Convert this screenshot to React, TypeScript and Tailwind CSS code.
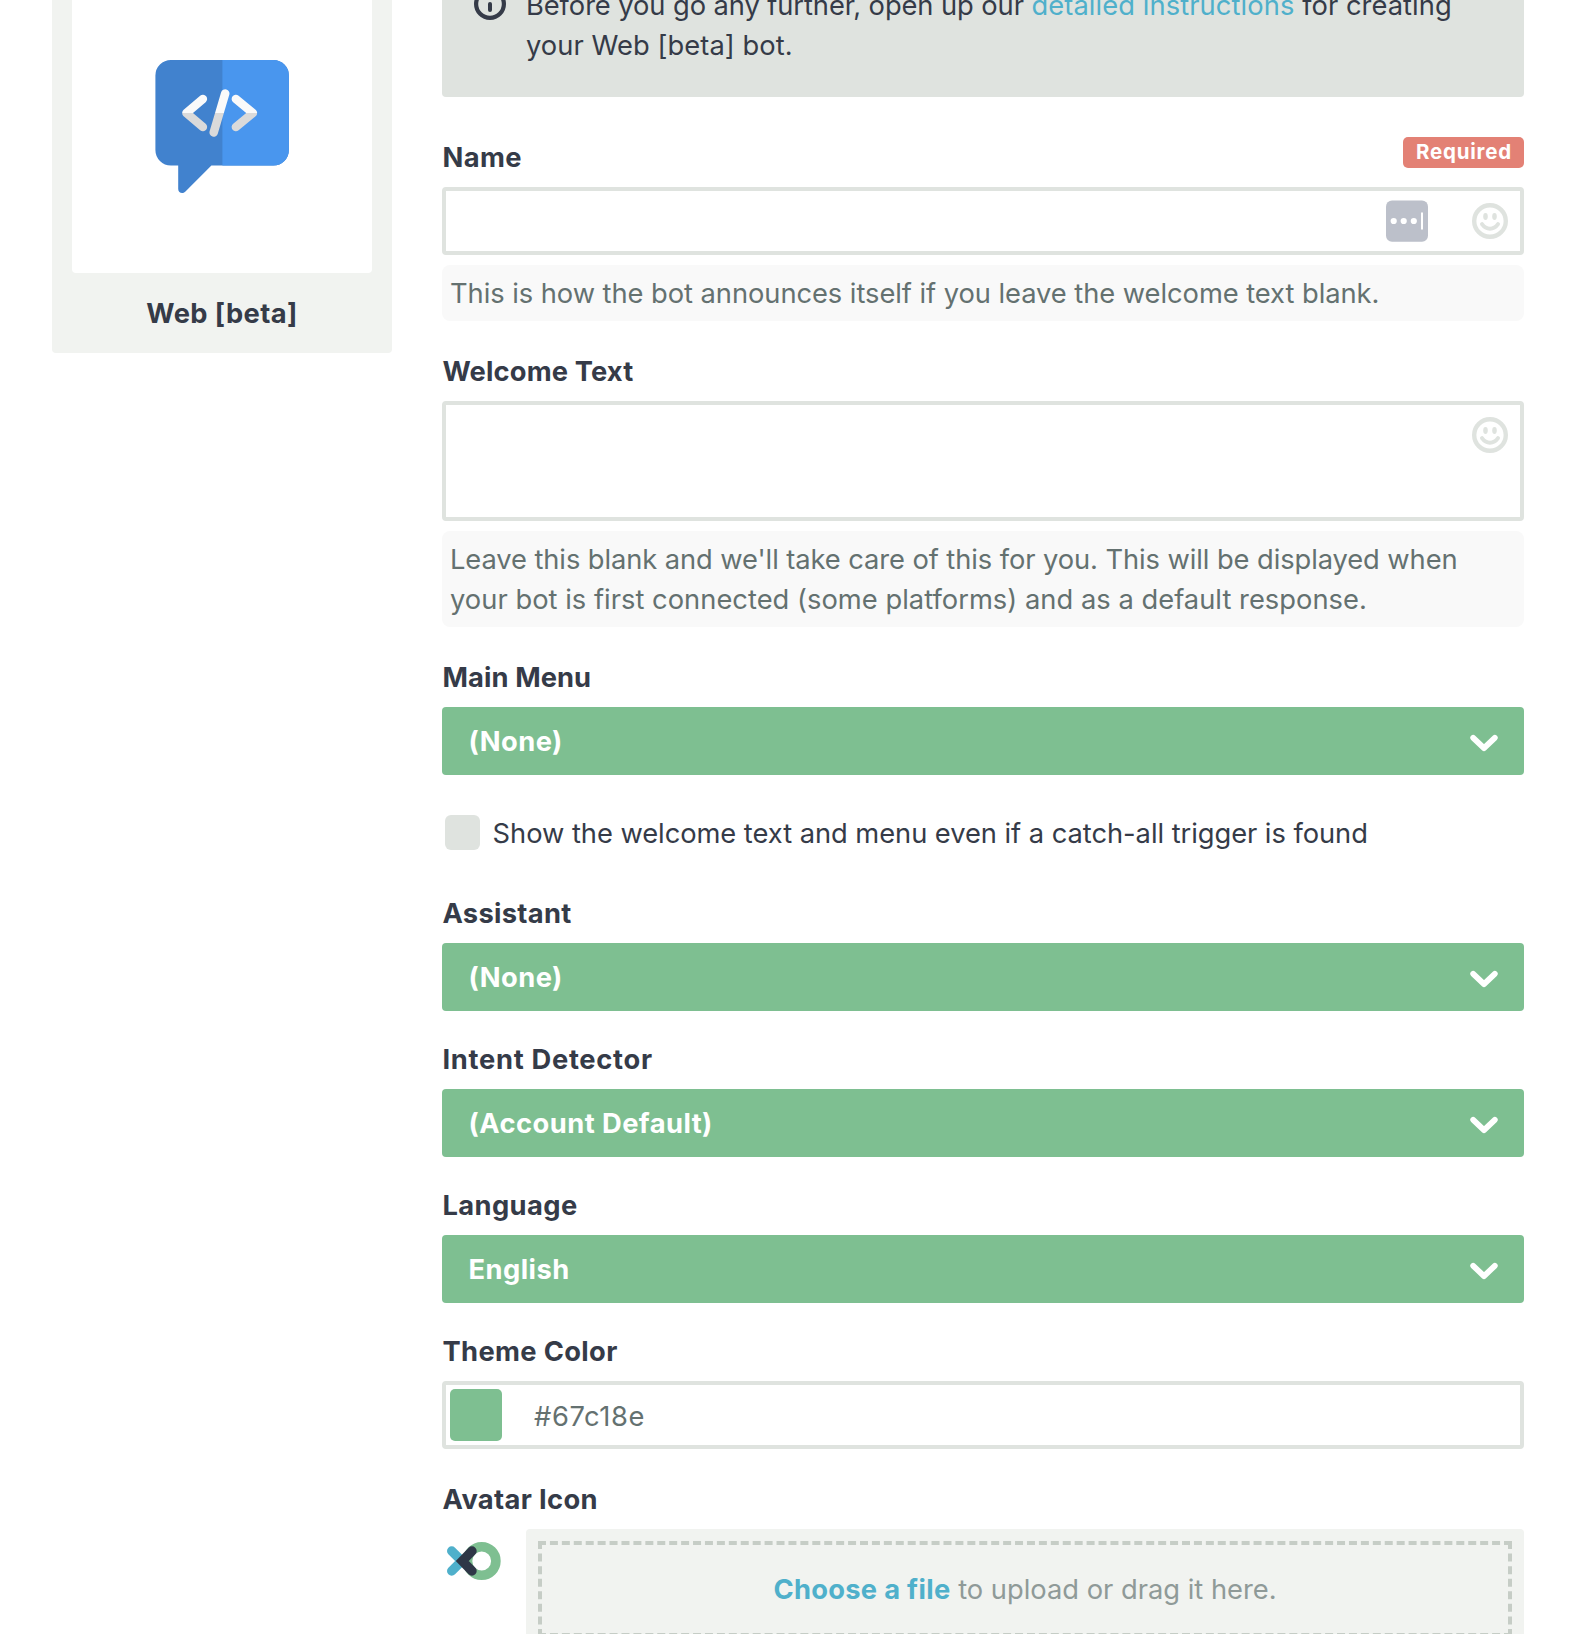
import type { ReactNode } from "react";

function WebIcon() {
  return (
    <svg width="134" height="134" viewBox="-0.4 0 134 134" fill="none">
      <defs>
        <clipPath id="code-top">
          <rect width="134" height="53" />
        </clipPath>
        <clipPath id="code-bottom">
          <rect y="53" width="134" height="81" />
        </clipPath>
        <clipPath id="right-half">
          <rect x="67" width="67" height="134" />
        </clipPath>
      </defs>
      <path
        d="M15.500 0H118a15.500 15.500 0 0 1 15.500 15.500V90a15.500 15.500 0 0 1-15.500 15.500H56L29.800 131.800c-2.600 2.600-7 1.200-7-2.800V105.500H15.500A15.500 15.500 0 0 1 0 90V15.500A15.500 15.500 0 0 1 15.500 0z"
        fill="#4182ce"
      />
      <rect width="133.500" height="105.500" rx="15.500" fill="#4996ee" clipPath="url(#right-half)" />
      <g strokeWidth="8.500" strokeLinecap="round" strokeLinejoin="round">
        <g stroke="#fafafa" clipPath="url(#code-top)">
          <path d="M47.500 39 31 53l16.500 14M69.800 33.500 58.300 72.500M80.500 39 97.500 53 80.500 67" />
        </g>
        <g stroke="#dadada" clipPath="url(#code-bottom)">
          <path d="M47.500 39 31 53l16.500 14M69.800 33.500 58.300 72.500M80.500 39 97.500 53 80.500 67" />
        </g>
      </g>
    </svg>
  );
}

function InfoIcon() {
  return (
    <svg width="32" height="32" viewBox="0 0 32 32" fill="none" stroke="#353b48" className="shrink-0">
      <circle cx="16" cy="16" r="13.900" strokeWidth="4.200" />
      <path d="M16 16v6" strokeWidth="4" strokeLinecap="round" />
      <path d="M16 9.500v.1" strokeWidth="4" strokeLinecap="round" />
    </svg>
  );
}

function Smiley() {
  return (
    <svg width="36" height="36" viewBox="0 0 36 36" fill="none" stroke="#dfe3df">
      <circle cx="18" cy="18" r="15.800" strokeWidth="4.400" />
      <ellipse cx="13.500" cy="13.500" rx="2.300" ry="3.400" fill="#dfe3df" stroke="none" />
      <ellipse cx="22.500" cy="13.500" rx="2.300" ry="3.400" fill="#dfe3df" stroke="none" />
      <path d="M10 21.200q3.300 4.600 8 4.600t8-4.600" strokeWidth="4" strokeLinecap="round" />
    </svg>
  );
}

function PasswordIcon() {
  return (
    <svg width="42" height="42" viewBox="0 0 42 42">
      <rect y="0.400" width="42" height="41.400" rx="6" fill="#bcc0ca" />
      <circle cx="7.700" cy="21" r="3.100" fill="#fff" />
      <circle cx="17.700" cy="21" r="3.100" fill="#fff" />
      <circle cx="27.800" cy="21" r="3.100" fill="#fff" />
      <rect x="35" y="12.500" width="2" height="17" fill="#fff" />
    </svg>
  );
}

function Chevron() {
  return (
    <svg width="28" height="18" viewBox="0 0 28 18" fill="none" className="mt-[3px]">
      <path d="M3.200 3.800 14 14.100 24.800 3.800" stroke="#fff" strokeWidth="5.800" strokeLinecap="round" strokeLinejoin="round" />
    </svg>
  );
}

function AvatarLogo() {
  return (
    <svg width="54" height="38" viewBox="0 0 54 38" fill="none">
      <circle cx="34.700" cy="19" r="14.200" stroke="#7ebf91" strokeWidth="9.600" />
      <path d="M4.700 9 14.700 19 4.700 29" stroke="#4fb0cb" strokeWidth="9.400" strokeLinecap="round" />
      <path d="M25 9 15.300 19 25 29" stroke="#2f3747" strokeWidth="9.400" strokeLinecap="round" />
    </svg>
  );
}

function Label({ children, spacing = "tracking-[0.15px]" }: { children: ReactNode; spacing?: string }) {
  return <div className={`mb-[9px] pt-px pl-[0.5px] leading-10 font-bold ${spacing}`}>{children}</div>;
}

function Help({ children }: { children: ReactNode }) {
  return (
    <div className="mt-2.5 rounded-lg bg-[#f9f9f9] px-2 pt-[9px] pb-[7px] leading-10 whitespace-nowrap text-[#647170]">
      {children}
    </div>
  );
}

function Select({ value }: { value: string }) {
  return (
    <button className="flex h-[68px] w-full items-center justify-between rounded bg-[#7ebf91] pr-[26px] pl-[26.6px] font-bold tracking-[0.45px] text-white">
      <span className="pt-0.5 leading-10">{value}</span>
      <Chevron />
    </button>
  );
}

export default function App() {
  return (
    <div className="flex h-[1634px] w-[1584px] items-start overflow-hidden bg-white pl-[52px] font-['Inter',sans-serif] text-[27.3px] text-[#353b48]">
      <aside className="flex h-[353px] w-[340px] flex-col rounded-b bg-[#f1f3f0] px-5">
        <div className="flex h-[273px] justify-center rounded-b bg-white pt-[60px]">
          <WebIcon />
        </div>
        <div className="mt-[21px] text-center leading-10 font-bold tracking-[0.4px]">Web [beta]</div>
      </aside>

      <main className="ml-[50px] w-[1082px]">
        <div className="flex h-[97px] items-end rounded-b bg-[#dfe3df] pb-[31px] pl-8">
          <div className="mb-[46px] shrink-0">
            <InfoIcon />
          </div>
          <p className="ml-5 leading-10 tracking-[0.05px] whitespace-nowrap">
            <span className="tracking-[-0.08px]">Before you go any further, open up our </span>
            <a className="tracking-[0.09px] text-[#4fb0cb]">detailed instructions</a> for creating
            <br />
            your Web [beta] bot.
          </p>
        </div>

        <section className="mt-10">
          <div className="flex items-start justify-between">
            <Label spacing="tracking-[0.4px]">Name</Label>
            <span className="flex h-[31px] items-center rounded-[5px] bg-[#e38175] pr-3 pb-px pl-[12.5px] text-[20.5px] leading-none font-bold tracking-[0.8px] text-white">
              Required
            </span>
          </div>
          <div className="flex h-[68px] items-center justify-end gap-11 rounded border-4 border-[#dfe3df] pr-3">
            <PasswordIcon />
            <Smiley />
          </div>
          <Help>
            <span className="tracking-[-0.05px]">This is how the bot announces itself if you leave the welcome text blank.</span>
          </Help>
        </section>

        <section className="mt-[30px]">
          <Label>Welcome Text</Label>
          <div className="flex h-[120px] justify-end rounded border-4 border-[#dfe3df] pt-3 pr-3">
            <Smiley />
          </div>
          <Help>
            <span className="tracking-[-0.08px]">
              Leave this blank and we'll take care of this for you. This will be displayed when
            </span>
            <br />
            <span className="tracking-[0.025px]">your bot is first connected (some platforms) and as a default response.</span>
          </Help>
        </section>

        <section className="mt-[30px]">
          <Label spacing="tracking-[0.1px]">Main Menu</Label>
          <Select value="(None)" />
        </section>

        <label className="mt-[38px] flex items-start gap-[12.6px] pl-[3px]">
          <span className="mt-0.5 size-[35px] shrink-0 rounded-md bg-[#dfe3df]" />
          <span className="pt-px leading-10 tracking-[-0.045px] whitespace-nowrap">
            Show the welcome text and menu even if a catch-all trigger is found
          </span>
        </label>

        <section className="mt-[39px]">
          <Label spacing="tracking-[0.3px]">Assistant</Label>
          <Select value="(None)" />
        </section>

        <section className="mt-7">
          <Label spacing="tracking-[0.7px]">Intent Detector</Label>
          <Select value="(Account Default)" />
        </section>

        <section className="mt-7">
          <Label spacing="tracking-[0.4px]">Language</Label>
          <Select value="English" />
        </section>

        <section className="mt-7">
          <Label spacing="tracking-[0.35px]">Theme Color</Label>
          <div className="flex h-[68px] items-center rounded border-4 border-[#dfe3df] pl-1">
            <span className="size-[52px] rounded-[5px] bg-[#7ebf91]" />
            <span className="ml-8 pt-1 leading-10 tracking-[0.6px] text-[#647170]">#67c18e</span>
          </div>
        </section>

        <section className="mt-[30px]">
          <Label spacing="tracking-[0.35px]">Avatar Icon</Label>
          <div className="flex items-start">
            <div className="w-[84px] shrink-0 pt-[13px] pl-[5px]">
              <AvatarLogo />
            </div>
            <div className="flex-1 rounded bg-[#f1f3f0] p-3">
              <div className="flex h-24 items-center justify-center border-4 border-dashed border-[#c6cdc6] pt-0.5 leading-10 whitespace-pre text-[#8f9a98]">
                <span className="font-bold tracking-[0.3px] text-[#4fb0cb]">Choose a file</span>
                <span> to upload or drag it here.</span>
              </div>
            </div>
          </div>
        </section>
      </main>
    </div>
  );
}
